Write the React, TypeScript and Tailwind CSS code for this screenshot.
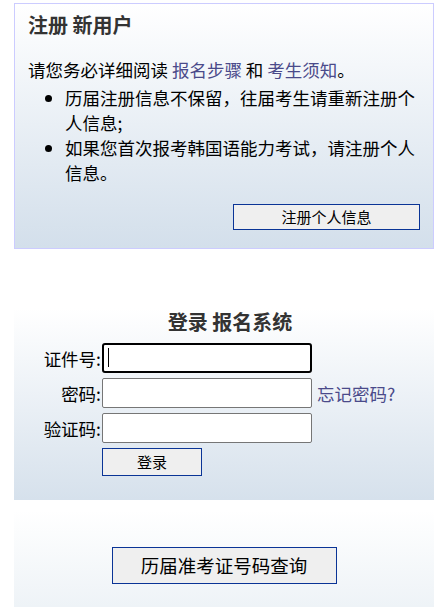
import { useState } from "react";

const font = { fontFamily: '"Noto Sans CJK SC", "Noto Sans", sans-serif' };

export default function App() {
    const [idNo, setIdNo] = useState("");
    const [password, setPassword] = useState("");
    const [captcha, setCaptcha] = useState("");

    return (
        <div className="min-h-[613px] bg-white pt-[3px] pl-[14px] pr-[13px] text-black" style={font}>
            {/* Register panel */}
            <div className="border border-[#ccccff] bg-gradient-to-b from-white to-[#d3dfeb] px-[13px] pt-[7px] pb-[18px]">
                <h2 className="text-[20px] leading-[28px] font-bold text-[#333333]">注册 新用户</h2>
                <p className="mt-[18px] text-[17.5px] leading-[25px]">
                    请您务必详细阅读 <a href="#" className="text-[#4a4a8a]">报名步骤</a> 和{" "}
                    <a href="#" className="text-[#4a4a8a]">考生须知</a>。
                </p>
                <ul className="mt-[3px] list-disc pl-[37px] text-[17.5px] leading-[25px]">
                    <li>历届注册信息不保留，往届考生请重新注册个人信息;</li>
                    <li>如果您首次报考韩国语能力考试，请注册个人信息。</li>
                </ul>
                <div className="mt-[19px] flex justify-end">
                    <button className="h-[26px] w-[187px] border border-[#0a3496] bg-[#efefef] text-[15px] leading-[24px]">
                        注册个人信息
                    </button>
                </div>
            </div>

            {/* Login panel */}
            <div className="mt-[59px] bg-gradient-to-b from-white to-[#d6e1ec] pb-[24px]">
                <h2 className="pl-[12px] text-center text-[20px] leading-[28px] font-bold text-[#333333]">登录 报名系统</h2>
                <div className="mt-[7px] flex flex-col gap-[5px]">
                    <div className="flex items-center">
                        <label className="w-[87px] text-right text-[17.5px] leading-[25px]">证件号:</label>
                        <div className="relative ml-px">
                            <input
                                value={idNo}
                                onChange={(e) => setIdNo(e.target.value)}
                                className="block h-[30px] w-[210px] rounded-[3px] border-2 border-black bg-white px-1 outline-none"
                            />
                            {idNo === "" && (
                                <span className="pointer-events-none absolute left-[6px] top-[5px] h-[19px] w-px bg-black" />
                            )}
                        </div>
                    </div>
                    <div className="flex items-center">
                        <label className="w-[87px] text-right text-[17.5px] leading-[25px]">密码:</label>
                        <input
                            type="password"
                            value={password}
                            onChange={(e) => setPassword(e.target.value)}
                            className="ml-px block h-[30px] w-[210px] rounded-[2px] border border-[#767676] bg-white px-1 outline-none"
                        />
                        <a href="#" className="ml-[5px] text-[17.5px] leading-[25px] text-[#4a4a8a]">忘记密码?</a>
                    </div>
                    <div className="flex items-center">
                        <label className="w-[87px] text-right text-[17.5px] leading-[25px]">验证码:</label>
                        <input
                            value={captcha}
                            onChange={(e) => setCaptcha(e.target.value)}
                            className="ml-px block h-[30px] w-[210px] rounded-[2px] border border-[#767676] bg-white px-1 outline-none"
                        />
                    </div>
                    <div className="flex">
                        <button className="ml-[88px] h-[28px] w-[100px] border border-[#0a3496] bg-[#efefef] text-[15px] leading-[26px]">
                            登录
                        </button>
                    </div>
                </div>
            </div>

            {/* Admission ticket lookup */}
            <div className="mt-[10px] flex justify-center bg-gradient-to-b from-white to-[#eef3f7] pt-[37px] pb-[23px]">
                <button className="h-[37px] w-[225px] border border-[#0a3496] bg-[#efefef] text-[18.5px] leading-[35px]">
                    历届准考证号码查询
                </button>
            </div>
        </div>
    );
}
